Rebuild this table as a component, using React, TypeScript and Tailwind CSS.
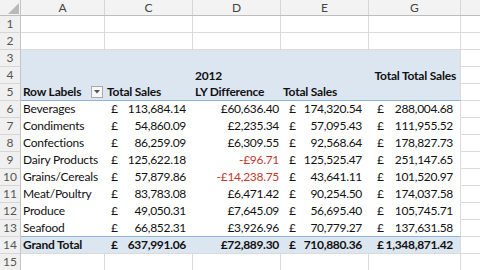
import React from "react";

const F = { fontFamily: "Lato, 'Open Sans', sans-serif" };

const G = "border-[#dadada]";
const BLUE = "bg-[#dce6f1]";
const NUM = "tracking-[-0.3px]";

type Row = [string, string, string, string, string];
const data: Row[] = [
  ["Beverages", "113,684.14", "£60,636.40", "174,320.54", "288,004.68"],
  ["Condiments", "54,860.09", "£2,235.34", "57,095.43", "111,955.52"],
  ["Confections", "86,259.09", "£6,309.55", "92,568.64", "178,827.73"],
  ["Dairy Products", "125,622.18", "-£96.71", "125,525.47", "251,147.65"],
  ["Grains/Cereals", "57,879.86", "-£14,238.75", "43,641.11", "101,520.97"],
  ["Meat/Poultry", "83,783.08", "£6,471.42", "90,254.50", "174,037.58"],
  ["Produce", "49,050.31", "£7,645.09", "56,695.40", "105,745.71"],
  ["Seafood", "66,852.31", "£3,926.96", "70,779.27", "137,631.58"],
];

function RowNum({ n }: { n: number }) {
  return (
    <div className="w-[21px] shrink-0 h-full bg-[#f0f0f0] border-r border-r-[#c4c4c4] border-b border-b-[#d6d6d6] flex items-center justify-center text-[12px] tracking-normal font-normal text-[#555]">
      {n}
    </div>
  );
}

function Acc({ v, w, bold, bb, pl }: { v: string; w: string; bold?: boolean; bb: string; pl: string }) {
  return (
    <div className={`${w} shrink-0 h-full flex items-center justify-between ${pl} pr-[7px] ${bb} ${bold ? "font-bold" : ""}`}>
      <span>£</span>
      <span className={NUM}>{v}</span>
    </div>
  );
}

function EmptyRow({ n }: { n: number }) {
  return (
    <div className="flex h-[17px]">
      <RowNum n={n} />
      <div className={`w-[84px] shrink-0 border-r border-b ${G}`} />
      <div className={`w-[88px] shrink-0 border-r border-b ${G}`} />
      <div className={`w-[88px] shrink-0 border-r border-b ${G}`} />
      <div className={`w-[88px] shrink-0 border-r border-b ${G}`} />
      <div className={`w-[92px] shrink-0 border-r border-b ${G}`} />
      <div className={`flex-1 border-b ${G}`} />
    </div>
  );
}

export default function App() {
  return (
    <div className="w-[480px] h-[270px] overflow-hidden bg-white text-[12px] tracking-[-0.2px] text-[#111] leading-none" style={F}>
      {/* column headers */}
      <div className="flex h-[16px] bg-[#f3f3f3] border-b border-b-[#bdbdbd] text-[12px] tracking-normal text-[#444]">
        <div className="w-[21px] shrink-0 border-r border-r-[#c4c4c4] relative">
          <svg className="absolute left-[8px] top-[3px]" width="11" height="11" viewBox="0 0 11 11">
            <polygon points="11,0 11,11 0,11" fill="#b9b9b9" />
          </svg>
        </div>
        <div className="w-[84px] shrink-0 border-r border-r-[#d6d6d6] flex items-center justify-center">A</div>
        <div className="w-[88px] shrink-0 border-r border-r-[#d6d6d6] flex items-center justify-center">C</div>
        <div className="w-[88px] shrink-0 border-r border-r-[#d6d6d6] flex items-center justify-center">D</div>
        <div className="w-[88px] shrink-0 border-r border-r-[#d6d6d6] flex items-center justify-center">E</div>
        <div className="w-[92px] shrink-0 border-r border-r-[#d6d6d6] flex items-center justify-center">G</div>
        <div className="flex-1" />
      </div>

      <EmptyRow n={1} />
      <EmptyRow n={2} />

      {/* row 3 */}
      <div className="flex h-[17px]">
        <RowNum n={3} />
        <div className={`w-[440px] shrink-0 ${BLUE} border-r ${G}`} />
        <div className={`flex-1 border-b ${G}`} />
      </div>
      {/* row 4 */}
      <div className="flex h-[17px] font-bold">
        <RowNum n={4} />
        <div className={`w-[84px] shrink-0 ${BLUE}`} />
        <div className={`w-[88px] shrink-0 ${BLUE}`} />
        <div className={`w-[88px] shrink-0 ${BLUE} flex items-center pl-[2px]`}>2012</div>
        <div className={`w-[88px] shrink-0 ${BLUE}`} />
        <div className={`w-[92px] shrink-0 ${BLUE} border-r ${G} flex items-center justify-end pr-[4px] whitespace-nowrap`}>Total Total Sales</div>
        <div className={`flex-1 border-b ${G}`} />
      </div>
      {/* row 5 */}
      <div className="flex h-[17px] font-bold">
        <RowNum n={5} />
        <div className={`w-[84px] shrink-0 ${BLUE} border-b border-b-[#95b3d7] flex items-center justify-between pl-[2px] pr-[2px]`}>
          <span>Row Labels</span>
          <span className="w-[12px] h-[12px] bg-[#f7f7f7] border border-[#a9a9a9] flex items-center justify-center">
            <svg width="6" height="4" viewBox="0 0 6 4"><polygon points="0,0 6,0 3,3.5" fill="#555" /></svg>
          </span>
        </div>
        <div className={`w-[88px] shrink-0 ${BLUE} border-b border-b-[#95b3d7] flex items-center pl-[2px]`}>Total Sales</div>
        <div className={`w-[88px] shrink-0 ${BLUE} border-b border-b-[#95b3d7] flex items-center pl-[2px]`}>LY Difference</div>
        <div className={`w-[88px] shrink-0 ${BLUE} border-b border-b-[#95b3d7] flex items-center pl-[2px]`}>Total Sales</div>
        <div className={`w-[92px] shrink-0 ${BLUE} border-b border-b-[#95b3d7] border-r border-r-[#dadada]`} />
        <div className={`flex-1 border-b ${G}`} />
      </div>

      {data.map((r, i) => {
        const last = i === data.length - 1;
        const bb = last ? "border-b border-b-[#95b3d7]" : "border-b border-b-white";
        const neg = r[2].startsWith("-");
        return (
          <div key={r[0]} className="flex h-[17px]">
            <RowNum n={6 + i} />
            <div className={`w-[84px] shrink-0 h-full flex items-center pl-[2px] whitespace-nowrap ${bb}`}>{r[0]}</div>
            <Acc v={r[1]} w="w-[88px]" bb={bb} pl="pl-[6px]" />
            <div className={`w-[88px] shrink-0 h-full flex items-center justify-end pr-[2px] ${NUM} ${bb} ${neg ? "text-[#c0392f]" : ""}`}>{r[2]}</div>
            <Acc v={r[3]} w="w-[88px]" bb={bb} pl="pl-[8px]" />
            <div className={`w-[92px] shrink-0 h-full flex items-center justify-between pl-[8px] pr-[7px] border-r border-r-[#dadada] ${bb}`}>
              <span>£</span>
              <span className={NUM}>{r[4]}</span>
            </div>
            <div className={`flex-1 border-b ${G}`} />
          </div>
        );
      })}

      {/* row 14 grand total */}
      <div className="flex h-[17px] font-bold">
        <RowNum n={14} />
        <div className={`w-[84px] shrink-0 h-full ${BLUE} flex items-center pl-[2px] border-b ${G}`}>Grand Total</div>
        <div className={`w-[88px] shrink-0 h-full ${BLUE} flex items-center justify-between pl-[6px] pr-[7px] border-b ${G}`}>
          <span>£</span><span className={NUM}>637,991.06</span>
        </div>
        <div className={`w-[88px] shrink-0 h-full ${BLUE} flex items-center justify-end pr-[2px] ${NUM} border-b ${G}`}>£72,889.30</div>
        <div className={`w-[88px] shrink-0 h-full ${BLUE} flex items-center justify-between pl-[8px] pr-[7px] border-b ${G}`}>
          <span>£</span><span className={NUM}>710,880.36</span>
        </div>
        <div className={`w-[92px] shrink-0 h-full ${BLUE} flex items-center justify-between pl-[8px] pr-[7px] border-b border-r ${G}`}>
          <span>£</span><span className={NUM}>1,348,871.42</span>
        </div>
        <div className={`flex-1 border-b ${G}`} />
      </div>

      <EmptyRow n={15} />
    </div>
  );
}
